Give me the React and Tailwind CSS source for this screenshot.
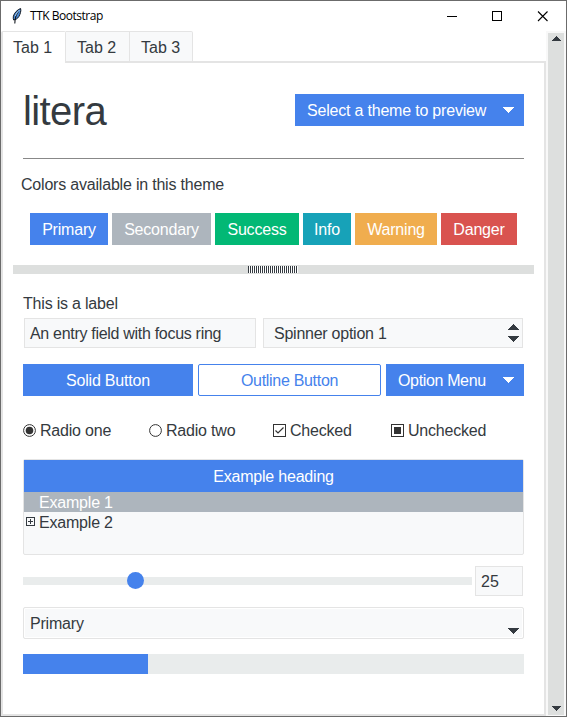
import React from "react";

function Feather() {
  return (
    <svg className="h-4 w-[10px]" viewBox="0 0 10 16">
      <path d="M8.600 .5C5.400 1.600 2.200 5 1.400 8.200c-.3 1.400-.2 2.800.3 3.800 1.700-.2 3.900-1.300 5.200-3.500C8.200 6 9.300 3 8.600.5Z" fill="#4a8bd8" stroke="#10151c" strokeWidth="1" />
      <path d="M6.500 3.500C4.500 6 3 9.500 2.800 15.500" fill="none" stroke="#10151c" strokeWidth="1.100" />
      <path d="M7.400 2.200C5.600 3.800 4.200 5.800 3.400 8" fill="none" stroke="#b9d8f2" strokeWidth=".9" />
    </svg>
  );
}

function Down({ className = "" }) {
  return (
    <svg className={"h-[6px] w-[11px] shrink-0 " + className} viewBox="0 0 11 6" shapeRendering="crispEdges">
      <path d="M0 0H11V1H10V2H9V3H8V4H7V5H6V6H5V5H4V4H3V3H2V2H1V1H0Z" fill="currentColor" />
    </svg>
  );
}

function ScrollArrow({ className = "" }) {
  return (
    <svg className={"h-[5px] w-[9px] " + className} viewBox="0 0 9 5" shapeRendering="crispEdges">
      <path d="M0 0H9V1H8V2H7V3H6V4H5V5H4V4H3V3H2V2H1V1H0Z" fill="#343a40" />
    </svg>
  );
}

const chips = [
  ["Primary", "w-[78px] bg-[#4582ec]"],
  ["Secondary", "w-[99px] bg-[#adb5bd]"],
  ["Success", "w-[84px] bg-[#02b875]"],
  ["Info", "w-[48px] bg-[#17a2b8]"],
  ["Warning", "w-[82px] bg-[#f0ad4e]"],
  ["Danger", "w-[76px] bg-[#d9534f]"],
];

function Option({ className, label, children }) {
  return (
    <div className={"flex items-center gap-1 " + className}>
      <svg className="h-[13px] w-[13px] shrink-0" viewBox="0 0 13 13">{children}</svg>
      <span className="pt-[2px]">{label}</span>
    </div>
  );
}

function TitleBar() {
  return (
    <div className="flex h-[30px] shrink-0 items-center pl-[11px] font-['Open_Sans','Noto_Sans',sans-serif] text-[12px] tracking-[-0.48px] text-black">
      <Feather />
      <span className="ml-[8px]">TTK Bootstrap</span>
      <svg className="mr-[18px] ml-auto h-[11px] w-[101px]" viewBox="0 0 101 11" fill="none" stroke="#000">
        <path d="M0 5.500H10M45.500 .5H54.500V9.500H45.500Z" shapeRendering="crispEdges" />
        <path d="M91 .5L100.500 10M100.500 .5L91 10" strokeWidth="1.100" />
      </svg>
    </div>
  );
}

function Tabs() {
  return (
    <div className="flex h-[32px] shrink-0 leading-[31px] tracking-normal">
      <div className="w-[65px] rounded-t-[2px] border-t border-r border-l-2 border-[#e4e4e4] bg-white pl-[10px]">Tab 1</div>
      <div className="w-[64px] border-t border-r border-b-2 border-[#e4e4e4] bg-[#f8f9fa] pl-[11px]">Tab 2</div>
      <div className="w-[63px] rounded-tr-[2px] border-t border-r border-b-2 border-[#e4e4e4] bg-[#f8f9fa] pl-[11px]">Tab 3</div>
      <div className="w-[353px] rounded-tr-[2px] border-b-2 border-[#e4e4e4]" />
    </div>
  );
}

export default function App() {
  return (
    <div className="flex h-[717px] w-[567px] flex-col overflow-hidden border border-[#6b6b6b] bg-white font-['Liberation_Sans',Arial,sans-serif] text-[16px] leading-5 tracking-[-0.2px] whitespace-nowrap text-[#343a40]">
      <TitleBar />
      <div className="flex min-h-0 flex-1">
        <div className="flex w-[545px] flex-col">
          <Tabs />
          <div className="flex min-h-0 flex-1 flex-col border-r-2 border-b-2 border-l-2 border-[#e4e4e4] px-[20px]">
            <div className="mt-[31px] flex h-8 items-center justify-between">
              <h1 className="pt-[2px] text-[40px] leading-8 tracking-[-0.6px]">litera</h1>
              <div className="flex h-8 w-[229px] items-center justify-between bg-[#4582ec] pr-[10px] pl-3 text-white">
                <span className="pt-[2px]">Select a theme to preview</span>
                <Down />
              </div>
            </div>
            <div className="mt-8 h-px shrink-0 bg-[#888888]" />
            <div className="mt-[16px] -ml-[2px]">Colors available in this theme</div>
            <div className="mt-[18px] ml-[7px] flex gap-1">
              {chips.map(([name, tone]) => (
                <div key={name} className={"flex h-8 shrink-0 items-center justify-center pt-[2px] text-white " + tone}>{name}</div>
              ))}
            </div>
            <div className="-mx-[10px] mt-5 flex h-[9px] shrink-0 items-center bg-[#dddfde] pl-[235px]">
              <div className="h-[7px] w-[50px] bg-[repeating-linear-gradient(90deg,#343a40_0px,#343a40_1px,#ffffff_1px,#ffffff_2px)]" />
            </div>
            <div className="mt-[20px]">This is a label</div>
            <div className="mx-px mt-[4px] flex gap-[7px]">
              <div className="flex h-[30px] w-[232px] items-center border border-[#e4e4e4] bg-[#f8f9fa] pt-[2px] pl-[5px] tracking-[-0.3px]">An entry field with focus ring</div>
              <div className="flex h-[30px] w-[260px] items-center justify-between border border-[#e4e4e4] bg-[#f8f9fa] pr-[3px] pl-[10px]">
                <span className="pt-[2px] tracking-[-0.25px]">Spinner option 1</span>
                <span className="flex flex-col gap-[6px]">
                  <Down className="rotate-180" />
                  <Down />
                </span>
              </div>
            </div>
            <div className="mt-4 flex gap-[5px]">
              <div className="flex h-8 w-[170px] items-center justify-center bg-[#4582ec] pt-[2px] text-white">Solid Button</div>
              <div className="flex h-8 w-[183px] items-center justify-center rounded-[2px] border border-[#4582ec] pt-[2px] tracking-[-0.3px] text-[#4582ec]">Outline Button</div>
              <div className="flex h-8 w-[138px] items-center justify-between bg-[#4582ec] pr-[10px] pl-3 text-white">
                <span className="pt-[2px] tracking-[-0.35px]">Option Menu</span>
                <Down />
              </div>
            </div>
            <div className="mt-[23px] flex h-[22px]">
              <Option className="w-[126px]" label="Radio one">
                <circle cx="6.500" cy="6.500" r="5.900" fill="#fff" stroke="#333" />
                <circle cx="6.500" cy="6.500" r="3.800" fill="#333" />
              </Option>
              <Option className="w-[124px]" label="Radio two">
                <circle cx="6.500" cy="6.500" r="5.900" fill="#fff" stroke="#333" />
              </Option>
              <Option className="w-[118px]" label="Checked">
                <rect x=".5" y=".5" width="12" height="12" fill="#fff" stroke="#333" />
                <path d="M2.500 6.500L5 9L10.500 3.500" fill="none" stroke="#333" strokeWidth="1.200" />
              </Option>
              <Option className="" label="Unchecked">
                <rect x=".5" y=".5" width="12" height="12" fill="#fff" stroke="#333" />
                <rect x="3" y="3" width="7" height="7" fill="#333" />
              </Option>
            </div>
            <div className="mt-[18px] h-24 shrink-0 rounded-[2px] border border-[#e4e4e4] bg-[#f8f9fa]">
              <div className="h-8 bg-[#4582ec] pt-px text-center leading-8 text-white">Example heading</div>
              <div className="h-5 bg-[#adb5bd] pl-[15px] leading-[21px] text-white">Example 1</div>
              <div className="flex h-5 items-center gap-1 pl-[2px] leading-[21px]">
                <svg className="-mt-[2px] h-[9px] w-[9px]" viewBox="0 0 9 9" shapeRendering="crispEdges">
                  <path d="M.5 .5H8.500V8.500H.5ZM2 4.500H7M4.500 2V7" fill="none" stroke="#343a40" />
                </svg>
                <span>Example 2</span>
              </div>
            </div>
            <div className="mt-[11px] flex h-[30px] items-center">
              <div className="flex h-2 w-[449px] items-center bg-[#e9ecec]">
                <div className="-mt-px ml-[104px] h-[17px] w-[17px] rounded-full bg-[#4582ec]" />
              </div>
              <div className="ml-[3px] flex h-[30px] w-12 items-center border border-[#e4e4e4] bg-[#f8f9fa] pt-[2px] pl-[5px] tracking-normal">25</div>
            </div>
            <div className="mt-[11px] flex h-8 items-end justify-between rounded-[2px] border border-[#e4e4e4] bg-[#f8f9fa] pr-[4px] pb-[4px] pl-[6px] ring-1 ring-white ring-inset">
              <span>Primary</span>
              <Down />
            </div>
            <div className="mt-[15px] h-5 shrink-0 bg-[#e9ecec]">
              <div className="h-5 w-[125px] bg-[#4582ec]" />
            </div>
          </div>
        </div>
        <div className="flex flex-1 bg-[#f8f8f8] pt-[2px] pr-[2px] pb-px pl-[2px]">
          <div className="flex w-4 flex-col items-center justify-between bg-[#dddfde] pt-[3px] pb-[4px]">
            <ScrollArrow className="rotate-180" />
            <ScrollArrow />
          </div>
        </div>
      </div>
    </div>
  );
}
